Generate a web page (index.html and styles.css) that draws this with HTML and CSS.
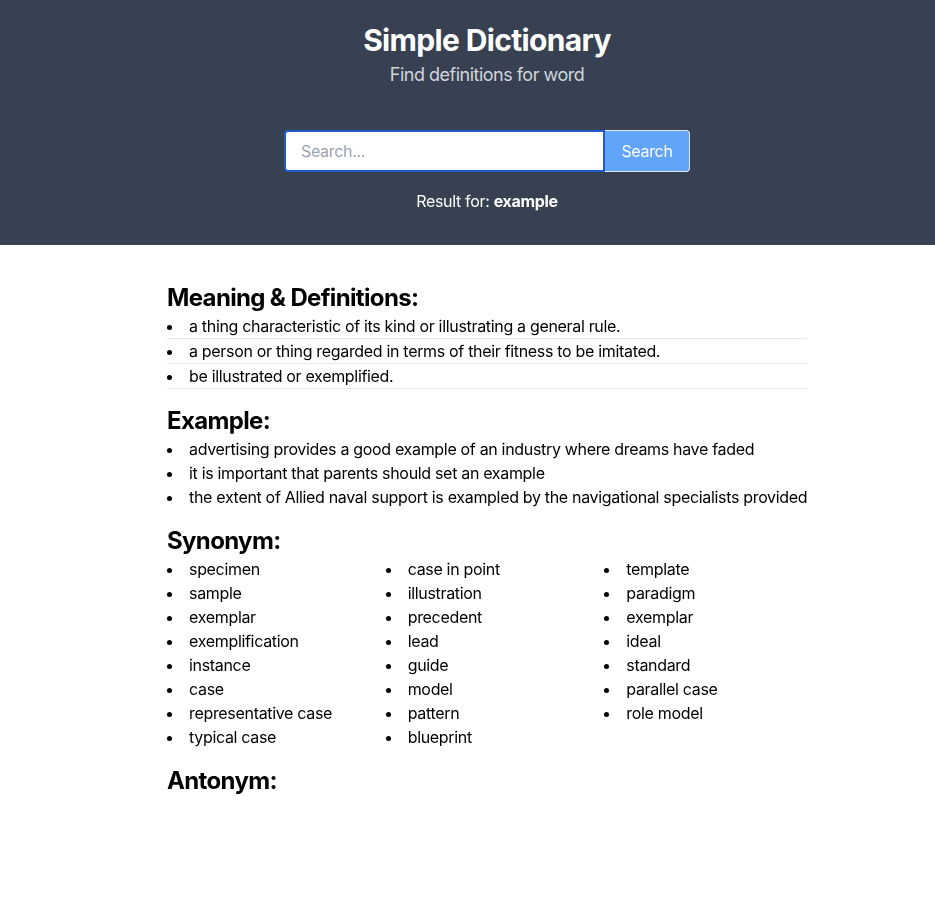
FILE: index.html
```html
<!DOCTYPE html>
<html lang="en">
<head>
<meta charset="utf-8">
<title>Simple Dictionary</title>
<link rel="stylesheet" href="styles.css">
</head>
<body>
<header class="header">
  <div class="inner">
    <h1 class="title">Simple Dictionary</h1>
    <p class="subtitle">Find definitions for word</p>
    <form class="search">
      <input class="search-input" type="text" placeholder="Search..." autofocus>
      <button class="search-btn" type="button">Search</button>
    </form>
    <p class="result">Result for: <b>example</b></p>
  </div>
</header>
<main class="main">
  <div class="container">
    <h2 class="heading">Meaning &amp; Definitions:</h2>
    <ul class="list defs">
      <li>a thing characteristic of its kind or illustrating a general rule.</li>
      <li>a person or thing regarded in terms of their fitness to be imitated.</li>
      <li>be illustrated or exemplified.</li>
    </ul>
    <h2 class="heading">Example:</h2>
    <ul class="list">
      <li>advertising provides a good example of an industry where dreams have faded</li>
      <li>it is important that parents should set an example</li>
      <li>the extent of Allied naval support is exampled by the navigational specialists provided</li>
    </ul>
    <h2 class="heading">Synonym:</h2>
    <ul class="list syn">
      <li>specimen</li>
      <li>case in point</li>
      <li>template</li>
      <li>sample</li>
      <li>illustration</li>
      <li>paradigm</li>
      <li>exemplar</li>
      <li>precedent</li>
      <li>exemplar</li>
      <li>exemplification</li>
      <li>lead</li>
      <li>ideal</li>
      <li>instance</li>
      <li>guide</li>
      <li>standard</li>
      <li>case</li>
      <li>model</li>
      <li>parallel case</li>
      <li>representative case</li>
      <li>pattern</li>
      <li>role model</li>
      <li>typical case</li>
      <li>blueprint</li>
    </ul>
    <h2 class="heading">Antonym:</h2>
  </div>
</main>
</body>
</html>
```

FILE: styles.css
```css
* { box-sizing: border-box; }
html, body { margin: 0; padding: 0; }
body {
  font-family: Inter, "Noto Sans", sans-serif;
  color: #000;
  background: #fff;
  overflow-x: hidden;
  letter-spacing: -0.02em;
}
.header {
  background: #374151;
  padding: 22px 0 32px 39px;
}
.inner {
  display: flex;
  flex-direction: column;
  align-items: center;
}
.title {
  margin: 0;
  font-size: 30px;
  line-height: 36px;
  font-weight: 700;
  color: #fff;
  letter-spacing: -0.022em;
}
.subtitle {
  margin: 3px 0 0;
  font-size: 18px;
  line-height: 28px;
  color: #d1d5db;
  letter-spacing: -0.028em;
}
.search {
  display: flex;
  margin-top: 41px;
}
.search-input {
  width: 321px;
  height: 42px;
  border: 2px solid #1e5bc6;
  border-radius: 4px 0 0 4px;
  padding: 0 15px;
  font-family: inherit;
  font-size: 16px;
  letter-spacing: -0.02em;
  color: #111827;
  outline: none;
  background: #fff;
}
.search-input::placeholder { color: #9ca3af; }
.search-btn {
  width: 85px;
  height: 42px;
  border: 1px solid #e5e7eb;
  border-left: none;
  border-radius: 0 4px 4px 0;
  background: #60a5fa;
  color: #fff;
  font-family: inherit;
  font-size: 16px;
  letter-spacing: -0.02em;
}
.result {
  margin: 17px 0 0;
  font-size: 16px;
  line-height: 24px;
  color: #fff;
}
.result b { font-weight: 700; }
.main {
  padding: 21px 0 40px 39px;
}
.container {
  width: 640px;
  margin: 0 auto;
}
.heading {
  margin: 16px 0 0;
  font-size: 24px;
  line-height: 32px;
  font-weight: 700;
  letter-spacing: -0.027em;
}
.list {
  margin: 0;
  padding: 0;
  list-style: disc inside;
  font-size: 16px;
  line-height: 24px;
}
.list li { white-space: nowrap; }
.defs { margin-bottom: 2px; }
.defs li { border-bottom: 1px solid #e5e7eb; }
.syn {
  display: grid;
  grid-template-columns: repeat(3, 218.67px);
  width: 656px;
}
```
